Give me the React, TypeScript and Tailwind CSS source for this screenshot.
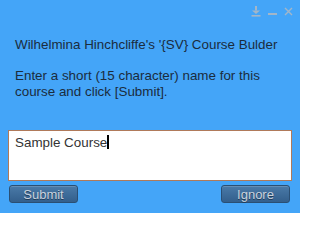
import React from 'react';

const DownloadIcon = () => (
    <svg width="10" height="11" viewBox="0 0 10 11" fill="none">
        <rect x="4" y="0" width="2" height="4.5" fill="#a3b6c8" />
        <path d="M1 4.5 H9 L5 8 Z" fill="#a3b6c8" />
        <rect x="0.5" y="9" width="9" height="1.6" fill="#a3b6c8" />
    </svg>
);

const MinimizeIcon = () => (
    <svg width="9" height="11" viewBox="0 0 9 11" fill="none">
        <rect x="0" y="7" width="9" height="2" fill="#a3b6c8" />
    </svg>
);

const CloseIcon = () => (
    <svg width="9" height="9" viewBox="0 0 9 9" fill="none">
        <path d="M1 1 L8 8 M8 1 L1 8" stroke="#a3b6c8" strokeWidth="1.4" />
    </svg>
);

const Button: React.FC<{ label: string }> = ({ label }) => (
    <button className="w-[69px] h-[18px] rounded-[3px] border border-[#2a4f74] bg-gradient-to-b from-[#4a7aa8] to-[#335f8c] text-[13px] leading-none text-[#c9d3dd] [text-shadow:0_1px_0_#203b57] shadow-[inset_0_1px_0_rgba(255,255,255,0.15)]">
        {label}
    </button>
);

export default function App() {
    return (
        <div
            className="w-[300px] h-[213px] bg-[#44a5f8] flex flex-col overflow-hidden"
            style={{ fontFamily: '"Liberation Sans", Arial, sans-serif' }}
        >
            <div className="h-[20px] flex items-center justify-end gap-[7px] pr-[7px] pt-[2px]">
                <DownloadIcon />
                <MinimizeIcon />
                <CloseIcon />
            </div>
            <div className="px-[15px] pt-[17px] text-[13.4px] text-[#1b2c3d] leading-[16px]">
                <p>Wilhelmina Hinchcliffe's '{'{'}SV{'}'} Course Bulder</p>
                <p className="mt-[15px]">Enter a short (15 character) name for this course and click [Submit].</p>
            </div>
            <div className="mx-[8px] mt-[30px] h-[51px] bg-white border border-[#b07a5a] px-[6px] pt-[4px] text-[13.4px] text-[#333] leading-[16px]">
                Sample Course<span className="inline-block w-[1.5px] h-[14px] bg-black align-[-2px]" />
            </div>
            <div className="mx-[9px] mt-[4px] flex justify-between pr-[1px]">
                <Button label="Submit" />
                <Button label="Ignore" />
            </div>
        </div>
    );
}
